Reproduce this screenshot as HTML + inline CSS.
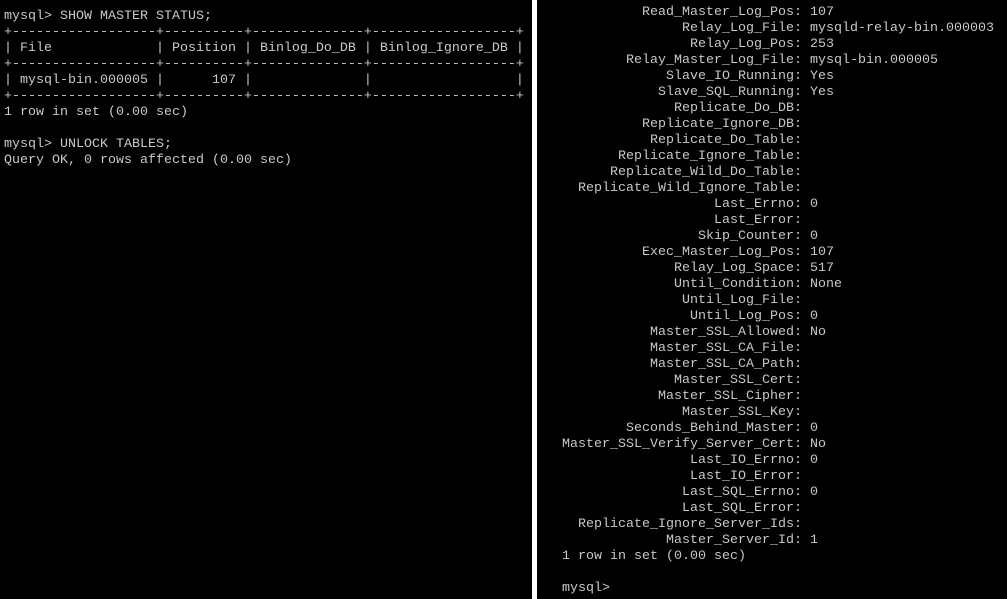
<!DOCTYPE html>
<html><head><meta charset="utf-8"><style>
html,body{margin:0;padding:0;background:#000;width:1007px;height:599px;overflow:hidden}
pre{margin:0;font-family:"Liberation Mono",monospace;font-size:13.33px;line-height:16px;color:#c8c8c8;position:absolute;white-space:pre}
#l{left:4px;top:9px}
#r{left:562px;top:5px}
#div{position:absolute;left:532px;top:0;width:5px;height:599px;background:#fff}
#r span{display:inline-block;width:240px;text-align:right}
</style></head><body>
<pre id="l">mysql&gt; SHOW MASTER STATUS;
+------------------+----------+--------------+------------------+
| File             | Position | Binlog_Do_DB | Binlog_Ignore_DB |
+------------------+----------+--------------+------------------+
| mysql-bin.000005 |      107 |              |                  |
+------------------+----------+--------------+------------------+
1 row in set (0.00 sec)

mysql&gt; UNLOCK TABLES;
Query OK, 0 rows affected (0.00 sec)</pre>
<div id="div"></div>
<pre id="r"><span>Read_Master_Log_Pos:</span> 107
<span>Relay_Log_File:</span> mysqld-relay-bin.000003
<span>Relay_Log_Pos:</span> 253
<span>Relay_Master_Log_File:</span> mysql-bin.000005
<span>Slave_IO_Running:</span> Yes
<span>Slave_SQL_Running:</span> Yes
<span>Replicate_Do_DB:</span>
<span>Replicate_Ignore_DB:</span>
<span>Replicate_Do_Table:</span>
<span>Replicate_Ignore_Table:</span>
<span>Replicate_Wild_Do_Table:</span>
<span>Replicate_Wild_Ignore_Table:</span>
<span>Last_Errno:</span> 0
<span>Last_Error:</span>
<span>Skip_Counter:</span> 0
<span>Exec_Master_Log_Pos:</span> 107
<span>Relay_Log_Space:</span> 517
<span>Until_Condition:</span> None
<span>Until_Log_File:</span>
<span>Until_Log_Pos:</span> 0
<span>Master_SSL_Allowed:</span> No
<span>Master_SSL_CA_File:</span>
<span>Master_SSL_CA_Path:</span>
<span>Master_SSL_Cert:</span>
<span>Master_SSL_Cipher:</span>
<span>Master_SSL_Key:</span>
<span>Seconds_Behind_Master:</span> 0
<span>Master_SSL_Verify_Server_Cert:</span> No
<span>Last_IO_Errno:</span> 0
<span>Last_IO_Error:</span>
<span>Last_SQL_Errno:</span> 0
<span>Last_SQL_Error:</span>
<span>Replicate_Ignore_Server_Ids:</span>
<span>Master_Server_Id:</span> 1
1 row in set (0.00 sec)

mysql&gt;</pre>
</body></html>
